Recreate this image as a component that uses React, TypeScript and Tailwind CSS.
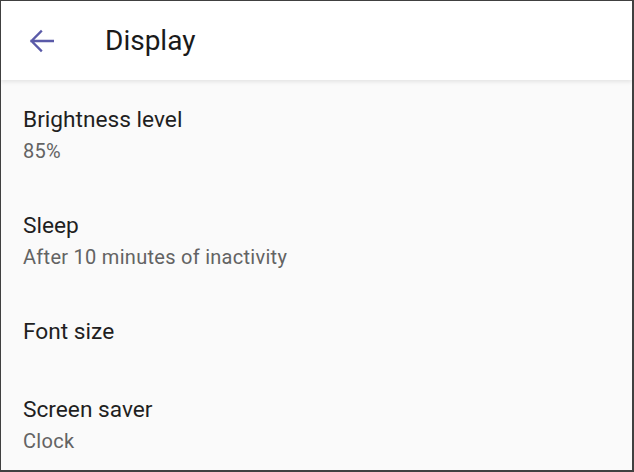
import React from 'react'

interface SettingItem {
  title: string
  summary?: string
}

const items: SettingItem[] = [
  { title: 'Brightness level', summary: '85%' },
  { title: 'Sleep', summary: 'After 10 minutes of inactivity' },
  { title: 'Font size' },
  { title: 'Screen saver', summary: 'Clock' },
]

function BackArrow() {
  return (
    <svg width="25" height="24" viewBox="0 0 25 24" fill="none" className="text-[#5a5aa8]">
      <path d="M24 12H2.5M12 2.5L2.5 12L12 21.5" stroke="currentColor" strokeWidth="2.3" strokeLinecap="square" />
    </svg>
  )
}

function SettingRow({ item }: { item: SettingItem }) {
  return (
    <div className="pl-[22px] pt-[24px] pb-[22px] flex flex-col">
      <div className="text-[22.7px] leading-[32px] text-[#1f1f1f]">{item.title}</div>
      {item.summary && (
        <div className="mt-[2px] text-[20px] leading-[26px] tracking-[0.28px] text-[#636363]">{item.summary}</div>
      )}
    </div>
  )
}

export default function App() {
  return (
    <div
      className="w-[634px] h-[472px] overflow-hidden bg-[#fafafa] border-[#404040] border-t border-l border-r-2 border-b-2 flex flex-col"
      style={{ fontFamily: 'Roboto, "Noto Sans", sans-serif' }}
    >
      <header className="h-[79px] shrink-0 bg-white flex items-center shadow-[0_2px_4px_rgba(0,0,0,0.09)] relative z-10">
        <div className="w-[104px] pl-[28px] flex items-center">
          <BackArrow />
        </div>
        <h1 className="text-[28px] leading-[79px] text-[#1a1a1a]">Display</h1>
      </header>
      <div className="flex flex-col">
        {items.map((it) => (
          <SettingRow key={it.title} item={it} />
        ))}
      </div>
    </div>
  )
}
